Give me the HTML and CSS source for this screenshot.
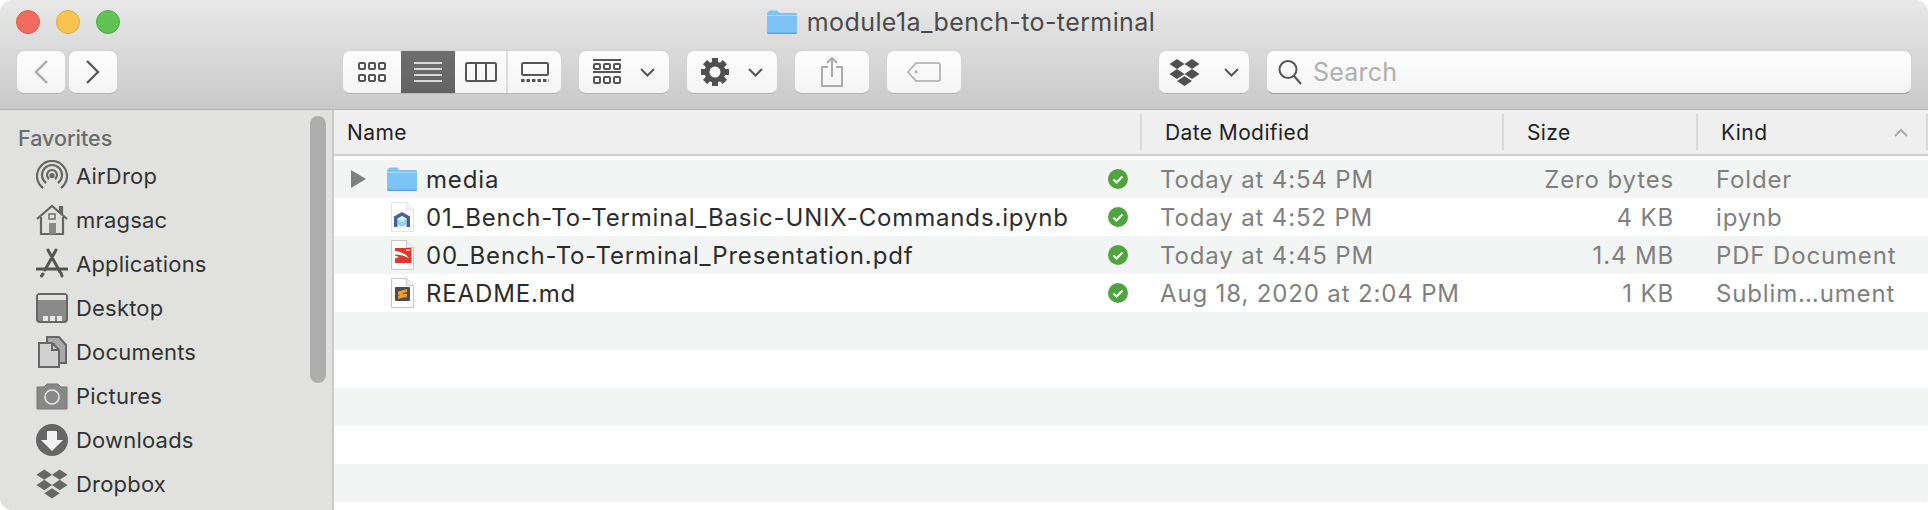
FILE: index.html
```html
<!DOCTYPE html>
<html lang="en">
<head>
    <meta charset="UTF-8">
    <title>module1a_bench-to-terminal</title>
    <link rel="stylesheet" href="styles.css">
</head>
<body>
<div class="window">
    <header class="toolbar">
        <div class="titlebar">
            <div class="lights">
                <span class="light red"></span>
                <span class="light yellow"></span>
                <span class="light green"></span>
            </div>
            <div class="title">
                <svg width="30" height="24" viewBox="0 0 30 24"><path d="M1 2.500Q1 .5 3 .5h7l2.500 2.500H29q1 0 1 1V22q0 1.500-1.500 1.500h-27Q0 23.500 0 22V3z" fill="#7cc4f5"/><path d="M0 5h30v1H0z" fill="#a5d9fa"/><path d="M0 22.500h30V23q0 1-1.500 1h-27Q0 24 0 23z" fill="#5ba6dc"/></svg>
                <span>module1a_bench-to-terminal</span>
            </div>
        </div>
        <div class="tools">
            <div class="btn-group nav">
                <button class="btn nav-btn"><svg width="14" height="24" viewBox="0 0 14 24"><path d="M13 1 2 12l11 11" fill="none" stroke="#ababab" stroke-width="2.400"/></svg></button>
                <button class="btn nav-btn"><svg width="14" height="24" viewBox="0 0 14 24"><path d="m1 1 11 11L1 23" fill="none" stroke="#5c5c5c" stroke-width="2.400"/></svg></button>
            </div>
            <div class="views btn">
                <span class="view first"><svg width="28" height="20" viewBox="0 0 28 20" fill="none" stroke="#555" stroke-width="2"><rect x="1" y="1" width="6" height="6" rx="1"/><rect x="11" y="1" width="6" height="6" rx="1"/><rect x="21" y="1" width="6" height="6" rx="1"/><rect x="1" y="13" width="6" height="6" rx="1"/><rect x="11" y="13" width="6" height="6" rx="1"/><rect x="21" y="13" width="6" height="6" rx="1"/></svg></span>
                <span class="view selected"><svg width="28" height="20" viewBox="0 0 28 20" stroke="#fff" stroke-width="1.600"><path d="M0 1h28M0 7h28M0 13h28M0 19h28"/></svg></span>
                <span class="view columns"><svg width="32" height="20" viewBox="0 0 32 20" fill="none" stroke="#555" stroke-width="2"><rect x="1" y="1" width="30" height="18" rx="1.500"/><path d="M11 1v18M21 1v18"/></svg></span>
                <span class="view gallery"><svg width="28" height="20" viewBox="0 0 28 20" fill="none" stroke="#555"><rect x="1" y="1" width="26" height="12" rx="1.500" stroke-width="2"/><path d="M0 18.500h28" stroke-width="3" stroke-dasharray="3.500 2"/></svg></span>
            </div>
            <button class="btn arrange">
                <svg width="28" height="26" viewBox="0 0 28 26" fill="none" stroke="#555" stroke-width="2"><path d="M0 1h28M0 13h28"/><rect x="1" y="5" width="6" height="5" rx="1"/><rect x="11" y="5" width="6" height="5" rx="1"/><rect x="21" y="5" width="6" height="5" rx="1"/><rect x="1" y="18" width="6" height="6" rx="1"/><rect x="11" y="18" width="6" height="6" rx="1"/><rect x="21" y="18" width="6" height="6" rx="1"/></svg>
                <svg class="chev" width="15" height="9" viewBox="0 0 15 9"><path d="m1 1 6.500 6.500L14 1" fill="none" stroke="#555" stroke-width="2"/></svg>
            </button>
            <button class="btn action">
                <svg width="28" height="28" viewBox="0 0 28 28"><g fill="#505050"><path d="M11 0h6v6h-6zM11 22h6v6h-6zM0 11h6v6H0zM22 11h6v6h-6z"/><path d="M11 0h6v6h-6zM11 22h6v6h-6zM0 11h6v6H0zM22 11h6v6h-6z" transform="rotate(45 14 14)"/></g><circle cx="14" cy="14" r="8" fill="none" stroke="#505050" stroke-width="5"/></svg>
                <svg class="chev" width="15" height="9" viewBox="0 0 15 9"><path d="m1 1 6.500 6.500L14 1" fill="none" stroke="#555" stroke-width="2"/></svg>
            </button>
            <button class="btn share"><svg width="22" height="30" viewBox="0 0 22 30" fill="none" stroke="#ababab" stroke-width="2"><path d="M7 10H1v19h20V10h-6M11 20V1M6 6l5-5 5 5"/></svg></button>
            <button class="btn tag"><svg width="34" height="20" viewBox="0 0 34 20" fill="none" stroke="#ababab" stroke-width="1.600"><path d="M9 1h22q2 0 2 2v14q0 2-2 2H9l-8-9z"/><circle cx="9" cy="10" r="1.400" fill="#ababab" stroke="none"/></svg></button>
            <button class="btn dropbox-btn">
                <svg width="31" height="27" viewBox="0 0 31 27" fill="#505050"><path d="m8 0 7.500 5L8 10 .5 5zM23 0l7.500 5L23 10l-7.500-5zM8 10l7.500 5L8 20 .5 15zM23 10l7.500 5L23 20l-7.500-5zM15.500 17l7.500 5-7.500 5L8 22z"/></svg>
                <svg class="chev wide" width="15" height="9" viewBox="0 0 15 9"><path d="m1 1 6.500 6.500L14 1" fill="none" stroke="#555" stroke-width="2"/></svg>
            </button>
            <div class="btn search">
                <svg width="24" height="26" viewBox="0 0 24 26" fill="none" stroke="#555" stroke-width="2"><circle cx="10" cy="10.500" r="8.500"/><path d="m16 17 7 8"/></svg>
                <span>Search</span>
            </div>
        </div>
    </header>

    <div class="content">
        <aside class="sidebar">
            <div class="sidebar-title">Favorites</div>
            <div class="side-item">
                <svg width="32" height="32" viewBox="0 0 32 32" fill="none" stroke="#666" stroke-width="2.200"><path d="M7 28A15 15 0 1 1 25 28"/><path d="M10 23A10 10 0 1 1 22 23"/><path d="M13 19A5 5 0 1 1 19 19"/><circle cx="16" cy="15.500" r="1.500" fill="#666"/></svg>
                <span>AirDrop</span>
            </div>
            <div class="side-item">
                <svg width="32" height="32" viewBox="0 0 32 32" fill="none" stroke="#666" stroke-width="2.200"><path d="M1 15 16 2l15 13M24 8V3h2v7"/><path d="M5 13v17h22V13"/><rect x="13" y="10" width="6" height="5" stroke-width="1.400"/><rect x="13" y="19" width="7" height="11" fill="#888" stroke="none"/></svg>
                <span>mragsac</span>
            </div>
            <div class="side-item">
                <svg width="32" height="32" viewBox="0 0 32 32" fill="none" stroke="#555" stroke-width="3" stroke-linecap="round"><path d="M12 2l12 22M20 2 9 22M1 21h30M7 26l-1.500 2M25 25l1 3"/></svg>
                <span>Applications</span>
            </div>
            <div class="side-item">
                <svg width="32" height="32" viewBox="0 0 32 32"><rect x="1" y="2" width="30" height="28" rx="3" fill="#8a8a8a" stroke="#666" stroke-width="2"/><rect x="2" y="3" width="28" height="5" fill="#e1e1df"/><path d="M7 24h5v5H7zM14 24h5v5h-5zM21 24h5v5h-5z" fill="#e8e8e8"/></svg>
                <span>Desktop</span>
            </div>
            <div class="side-item">
                <svg width="32" height="32" viewBox="0 0 32 32" stroke="#666" stroke-width="2"><path d="M11 1h12l7 8v18H18V8h-7z" fill="#a9a9a9"/><path d="M3 7h13l7 7v17H3z" fill="#d2d2d2"/><path d="M16 7v7h7" fill="none"/></svg>
                <span>Documents</span>
            </div>
            <div class="side-item">
                <svg width="32" height="32" viewBox="0 0 32 32"><path d="M1 7h7l3-3h11l3 3h6v22H1z" fill="#888" stroke="#777"/><circle cx="16" cy="17" r="7" fill="none" stroke="#e6e6e6" stroke-width="1.600"/></svg>
                <span>Pictures</span>
            </div>
            <div class="side-item">
                <svg width="32" height="32" viewBox="0 0 32 32"><circle cx="16" cy="16" r="16" fill="#666"/><path d="M11 7h10v9h6L16 27 5 16h6z" fill="#f2f2f2"/></svg>
                <span>Downloads</span>
            </div>
            <div class="side-item">
                <svg width="32" height="30" viewBox="0 0 31 28" fill="#666"><path d="m8 0 7.500 5L8 10 .5 5zM23 0l7.500 5L23 10l-7.500-5zM8 10l7.500 5L8 20 .5 15zM23 10l7.500 5L23 20l-7.500-5zM15.500 18l7.500 5-7.500 5L8 23z"/></svg>
                <span>Dropbox</span>
            </div>
            <div class="scrollbar"></div>
        </aside>

        <main class="files">
            <div class="columns-row header">
                <div class="col-head name-head">Name</div>
                <div class="col-head">Date Modified</div>
                <div class="col-head">Size</div>
                <div class="col-head kind-head">
                    <span>Kind</span>
                    <svg width="14" height="9" viewBox="0 0 14 9"><path d="m1 8 6-6 6 6" fill="none" stroke="#aaa" stroke-width="2"/></svg>
                </div>
            </div>
            <div class="rows">
                <div class="columns-row row">
                    <div class="name-cell">
                        <span class="disclosure"><svg width="15" height="18" viewBox="0 0 15 18"><path d="M0 0l15 9-15 9z" fill="#808080"/></svg></span>
                        <svg class="file-icon" width="30" height="24" viewBox="0 0 30 24"><path d="M1 2.500Q1 .5 3 .5h7l2.500 2.500H29q1 0 1 1V22q0 1.500-1.500 1.500h-27Q0 23.500 0 22V3z" fill="#7cc4f5"/><path d="M0 5h30v1H0z" fill="#a5d9fa"/><path d="M0 22.500h30V23q0 1-1.500 1h-27Q0 24 0 23z" fill="#5ba6dc"/></svg>
                        <span class="file-name">media</span>
                        <svg class="check" width="20" height="20" viewBox="0 0 20 20"><circle cx="10" cy="10" r="10" fill="#4fa43f"/><path d="m5.500 10.500 3 3 6-6" fill="none" stroke="#fff" stroke-width="2.200"/></svg>
                    </div>
                    <div class="date-cell">Today at 4:54 PM</div>
                    <div class="size-cell">Zero bytes</div>
                    <div class="kind-cell">Folder</div>
                </div>
                <div class="columns-row row">
                    <div class="name-cell">
                        <span class="disclosure"></span>
                        <svg class="file-icon" width="30" height="30" viewBox="0 0 30 30"><path d="M4.500.5h15l7 7v22h-22z" fill="#fff" stroke="#e4e4e4"/><path d="M19.500.5v7h7" fill="#f4f4f4" stroke="#e4e4e4"/><path d="M15 10l8 4.500V25h-3.500v-8.500L15 14l-4.500 2.500V25H7V14.500z" fill="#41639a"/><path d="M15 15.500l4 2.300v5L15 25l-4-2.200v-5z" fill="#8fd3f2"/><path d="M15 15.500l4 2.300-4 2.200-4-2.200z" fill="#c9ecfa"/></svg>
                        <span class="file-name">01_Bench-To-Terminal_Basic-UNIX-Commands.ipynb</span>
                        <svg class="check" width="20" height="20" viewBox="0 0 20 20"><circle cx="10" cy="10" r="10" fill="#4fa43f"/><path d="m5.500 10.500 3 3 6-6" fill="none" stroke="#fff" stroke-width="2.200"/></svg>
                    </div>
                    <div class="date-cell">Today at 4:52 PM</div>
                    <div class="size-cell">4 KB</div>
                    <div class="kind-cell">ipynb</div>
                </div>
                <div class="columns-row row">
                    <div class="name-cell">
                        <span class="disclosure"></span>
                        <svg class="file-icon" width="30" height="30" viewBox="0 0 30 30"><path d="M4.500.5h15l7 7v22h-22z" fill="#fff" stroke="#c8c8c8"/><path d="M19.500.5v7h7" fill="#efefef" stroke="#c8c8c8"/><path d="M8 8h15.500q1 0 1 1v14H8z" fill="#e0392b"/><path d="M8 11q9 1 14 7-7-4-14-3.500z" fill="#fff"/><path d="M8 15.500l4 1.500-4 1.500z" fill="#fff"/><path d="M19 9.500h4v1.500h-4z" fill="#f7c8c3"/></svg>
                        <span class="file-name">00_Bench-To-Terminal_Presentation.pdf</span>
                        <svg class="check" width="20" height="20" viewBox="0 0 20 20"><circle cx="10" cy="10" r="10" fill="#4fa43f"/><path d="m5.500 10.500 3 3 6-6" fill="none" stroke="#fff" stroke-width="2.200"/></svg>
                    </div>
                    <div class="date-cell">Today at 4:45 PM</div>
                    <div class="size-cell">1.4 MB</div>
                    <div class="kind-cell">PDF Document</div>
                </div>
                <div class="columns-row row">
                    <div class="name-cell">
                        <span class="disclosure"></span>
                        <svg class="file-icon" width="30" height="30" viewBox="0 0 30 30"><path d="M4.500.5h15l7 7v22h-22z" fill="#fff" stroke="#c8c8c8"/><path d="M19.500.5v7h7" fill="#efefef" stroke="#c8c8c8"/><rect x="8" y="9" width="15" height="14" rx="1" fill="#4c4c4c"/><path d="M11 13.500l9-2.500v3l-9 2.500zM11 14l9 2.700v3L11 17zM11 18l9-2.500v3l-9 2.500z" fill="#f29c2b"/></svg>
                        <span class="file-name">README.md</span>
                        <svg class="check" width="20" height="20" viewBox="0 0 20 20"><circle cx="10" cy="10" r="10" fill="#4fa43f"/><path d="m5.500 10.500 3 3 6-6" fill="none" stroke="#fff" stroke-width="2.200"/></svg>
                    </div>
                    <div class="date-cell">Aug 18, 2020 at 2:04 PM</div>
                    <div class="size-cell">1 KB</div>
                    <div class="kind-cell">Sublim…ument</div>
                </div>
                <div class="row"></div>
                <div class="row"></div>
                <div class="row"></div>
                <div class="row"></div>
                <div class="row"></div>
            </div>
        </main>
    </div>
</div>
</body>
</html>
```

FILE: styles.css
```css
* {
    box-sizing: border-box;
}

html, body {
    margin: 0;
    height: 100%;
    background: #fff;
    overflow: hidden;
}

body {
    font-family: Inter, "Liberation Sans", sans-serif;
}

.window {
    height: 510px;
    display: flex;
    flex-direction: column;
    border-radius: 12px;
    overflow: hidden;
    background: #fff;
}

/* toolbar */
.toolbar {
    height: 110px;
    flex: none;
    background: linear-gradient(#e8e8e8, #c9c9c9);
    border-bottom: 1px solid #b2b2b2;
}

.titlebar {
    height: 50px;
    padding: 10px 22px 0 16px;
    display: grid;
    grid-template-columns: 1fr auto 1fr;
    align-items: start;
}

.lights {
    display: flex;
    gap: 16px;
}

.light {
    width: 24px;
    height: 24px;
    border-radius: 50%;
}

.red { background: #f36b5e; border: 1px solid #de5a4e; }
.yellow { background: #f8c44f; border: 1px solid #dfa93c; }
.green { background: #5fc454; border: 1px solid #4eab43; }

.title {
    display: flex;
    align-items: center;
    gap: 10px;
    height: 24px;
    font-size: 25px;
    letter-spacing: 0.4px;
    color: #4a4a4a;
}

.tools {
    display: flex;
    padding: 0 16px;
}

.btn {
    height: 44px;
    display: flex;
    align-items: center;
    justify-content: center;
    padding: 0;
    font: inherit;
    background: linear-gradient(#fdfdfd, #f4f4f4);
    border: 1px solid #d2d2d2;
    border-bottom-color: #b5b5b5;
    border-radius: 8px;
}

.nav {
    display: flex;
    gap: 2px;
}

.nav-btn {
    width: 50px;
}

.views {
    width: 220px;
    margin-left: 224px;
    overflow: hidden;
    justify-content: flex-start;
}

.view {
    height: 44px;
    display: flex;
    align-items: center;
    justify-content: center;
}

.view.first { width: 58px; }
.view.selected { width: 54px; background: linear-gradient(#6f6f6f, #626262); }
.view.columns { width: 53px; border-right: 2px solid #dcdcdc; }
.view.gallery { width: 53px; }

.arrange, .action, .dropbox-btn {
    width: 92px;
    margin-left: 16px;
    gap: 19px;
}

.chev.wide {
    margin-left: 5px;
}

.share, .tag {
    width: 76px;
    margin-left: 16px;
}

.dropbox-btn {
    margin-left: 196px;
}

.search {
    flex: 1;
    margin-left: 16px;
    justify-content: flex-start;
    padding-left: 11px;
    gap: 11px;
    font-size: 25px;
    letter-spacing: 0.2px;
    color: #b0b0b0;
    border-bottom-color: #9c9c9c;
}

/* sidebar */
.content {
    flex: 1;
    display: flex;
    min-height: 0;
}

.sidebar {
    position: relative;
    width: 334px;
    flex: none;
    background: #e1e1df;
    border-right: 2px solid #c9c9c9;
}

.sidebar-title {
    height: 44px;
    padding: 15px 0 0 18px;
    font-size: 21.500px;
    font-weight: 500;
    color: #6c6c6c;
}

.side-item {
    height: 44px;
    display: flex;
    align-items: center;
    gap: 8px;
    padding-left: 36px;
    font-size: 22px;
    letter-spacing: 0.2px;
    color: #333;
}

.scrollbar {
    position: absolute;
    left: 310px;
    top: 6px;
    width: 16px;
    height: 267px;
    border-radius: 8px;
    background: #adadad;
}

/* file list */
.files {
    flex: 1;
    min-width: 0;
}

.columns-row {
    display: grid;
    grid-template-columns: 806px 362px 194px 232px;
}

.header {
    height: 46px;
    padding: 4px 0;
    background: #efefef;
    border-bottom: 2px solid #d0d0d0;
    font-size: 21px;
    letter-spacing: 0.4px;
    color: #222;
}

.col-head {
    display: flex;
    align-items: center;
    padding-left: 23px;
    border-left: 2px solid #d9d9d9;
}

.name-head {
    padding-left: 13px;
    border-left: none;
}

.kind-head {
    justify-content: space-between;
    padding-right: 18px;
    border-right: 2px solid #d9d9d9;
}

.rows {
    padding-top: 4px;
    background: #fff;
}

.row {
    height: 38px;
    align-items: center;
    font-size: 24px;
    letter-spacing: 0.85px;
    color: #7f7f7f;
}

.row:nth-child(odd) {
    background: #f3f5f4;
}

.name-cell {
    display: flex;
    align-items: center;
    padding: 0 12px 0 17px;
    color: #2c2c2c;
}

.disclosure {
    width: 36px;
    flex: none;
    display: flex;
    align-items: center;
}

.file-icon {
    flex: none;
}

.file-name {
    margin-left: 9px;
    white-space: nowrap;
}

.check {
    margin-left: auto;
    flex: none;
}

.date-cell {
    padding-left: 20px;
}

.size-cell {
    padding-right: 22px;
    text-align: right;
}

.kind-cell {
    padding-left: 20px;
}
```
